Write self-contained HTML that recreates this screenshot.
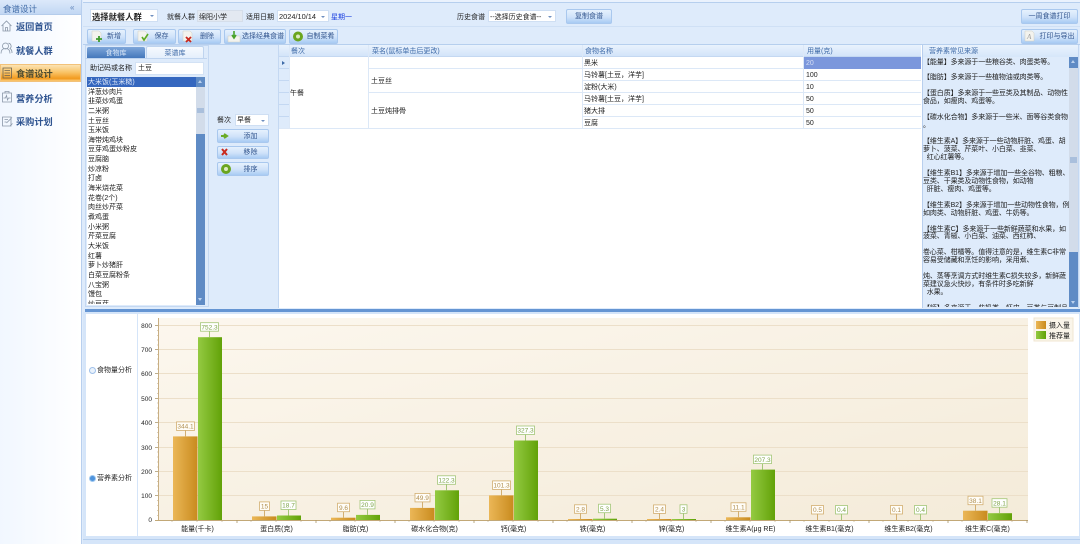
<!DOCTYPE html>
<html lang="zh"><head><meta charset="utf-8"><title>食谱设计</title>
<style>
*{box-sizing:border-box}
html,body{margin:0;padding:0;background:#deebfb}
#w{width:1080px;height:544px;position:relative;overflow:hidden;background:#deebfb;font-family:"Liberation Sans","Noto Sans CJK SC",sans-serif;font-size:7px;color:#222;filter:blur(.3px)}
.a,.t{position:absolute}
.t{white-space:pre;line-height:10px;height:10px;margin-top:.8px}
.nav{font-size:9.2px;font-weight:700;color:#2f5490;left:16px;line-height:14px;height:14px;margin-top:2px}
.btn{position:absolute;border:1px solid #a9c8ee;border-radius:2px;background:linear-gradient(#e6f1fd,#cfe2f9 55%,#a8cbf3);color:#34578f;text-align:center;font-size:7px;line-height:13.5px;white-space:nowrap}
.sel{position:absolute;background:#fff;border:1px solid #cfdff3}
.sel:after{content:"";position:absolute;right:3px;top:45%;border:2px solid transparent;border-top:2.5px solid #6f8fc0;border-bottom:0}
.lst{left:88px;color:#222}
.h{color:#3f6ba8;top:46px}
.c{color:#222}
.ln{position:absolute;background:#dce8f7}
svg{position:absolute;overflow:visible}
#chart text{font-family:"Liberation Sans","Noto Sans CJK SC",sans-serif}
.yl{font-size:6.5px;fill:#222;text-anchor:end}
.xl{font-size:7px;fill:#222;text-anchor:middle}
.lo rect{fill:#fffdf8;stroke:#d2ae70;stroke-width:.8}
.lg rect{fill:#fff;stroke:#a3c678;stroke-width:.8}
.lo path{stroke:#d2ae70;stroke-width:1;fill:none}
.lg path{stroke:#a3c678;stroke-width:1;fill:none}
.lo text{font-size:6.5px;fill:#b08f50;text-anchor:middle}
.lg text{font-size:6.5px;fill:#7da348;text-anchor:middle}
</style></head><body><div id="w">

<!-- sidebar -->
<div class="a" style="left:0;top:0;width:82px;height:544px;background:linear-gradient(90deg,#f1f7ff,#fff);border-right:1px solid #b8cfee"></div>
<div class="a" style="left:0;top:0;width:81px;height:15px;background:linear-gradient(#dce9fa,#c2d7f3);border-bottom:1px solid #b4cceb"></div>
<div class="t" style="left:3px;top:3px;font-size:8.5px;color:#3f6aa6">食谱设计</div>
<div class="t" style="left:70px;top:2px;font-size:8px;color:#5d82b8">«</div>
<div class="a" style="left:0;top:64px;width:81px;height:18px;background:linear-gradient(#fbe3b4,#f9c468 45%,#f29a1e 85%,#fbcc7a);border:1px solid #f2c27a"></div>
<svg style="left:0;top:0" width="16" height="130" fill="none" stroke="#8a97a8" stroke-width=".8">
<path d="M1.500 26 L6.500 21 L11.500 26 M3 25 V31 H10 V25 M5.500 31 V27.500 H7.500 V31"/>
<circle cx="5.500" cy="46" r="3"/>
<path d="M1 53.500 c0-3.500 2-5 4.500-5 s4.500 1.500 4.500 5 M8.500 43.200 a3 3 0 0 1 1.500 5.300 c1.500 .7 2 2.500 2 4.500"/>
<path d="M3 68 H11.500 V78 H3 Z M4.500 70.500 H10 M4.500 73 H10 M4.500 75.500 H10" stroke="#6b6250"/>
<path d="M2.500 93 H11.500 V102 H2.500 Z M5 93 V91.500 H9 V93 M3.500 98 H5.500 L6.500 95.500 L7.500 100 L8.500 98 H10.500"/>
<path d="M2.500 117 H11 V126 H2.500 Z M4.500 119.500 H8 M4.500 122 H6.500 M6.500 123 L12 117.500 M10 126 L12.500 123.500"/>
</svg>
<div class="t nav" style="top:18px">返回首页</div>
<div class="t nav" style="top:42px">就餐人群</div>
<div class="t nav" style="top:65px;color:#4a4a30">食谱设计</div>
<div class="t nav" style="top:89.500px">营养分析</div>
<div class="t nav" style="top:113px">采购计划</div>

<!-- main top strips -->
<div class="a" style="left:83px;top:0;width:997px;height:3px;background:#eaf2fd;border-bottom:1px solid #b6cfee"></div>
<div class="a" style="left:83px;top:26px;width:997px;height:1px;background:#cfe0f5"></div>
<div class="a" style="left:83px;top:44px;width:997px;height:1px;background:#b6cfee"></div>

<div class="sel" style="left:90px;top:9px;width:68px;height:13px"></div>
<div class="t" style="left:92px;top:11px;font-size:8.300px;font-weight:700;color:#222">选择就餐人群</div>
<div class="t" style="left:167px;top:12px">就餐人群</div>
<div class="a" style="left:197px;top:10px;width:46px;height:12px;background:#e3e9f1;border:1px solid #d5deea"></div>
<div class="t" style="left:199px;top:12px">绵阳小学</div>
<div class="t" style="left:246px;top:12px">适用日期</div>
<div class="sel" style="left:277px;top:10px;width:52px;height:12px"></div>
<div class="t" style="left:279px;top:11px;font-size:7.400px">2024/10/14</div>
<div class="t" style="left:331px;top:12px;color:#1b3fe0">星期一</div>
<div class="t" style="left:457px;top:12px">历史食谱</div>
<div class="sel" style="left:488px;top:10px;width:68px;height:12px"></div>
<div class="t" style="left:490px;top:12px">--选择历史食谱--</div>
<div class="btn" style="left:566px;top:9px;width:46px;height:15px">复制食谱</div>
<div class="btn" style="left:1021px;top:9px;width:57px;height:15px">一周食谱打印</div>

<!-- toolbar -->
<div class="btn" style="left:87px;top:29px;width:39px;height:15px;padding-left:15px">新增</div>
<div class="btn" style="left:133px;top:29px;width:43px;height:15px;padding-left:14px">保存</div>
<div class="btn" style="left:178px;top:29px;width:43px;height:15px;padding-left:15px">删除</div>
<div class="btn" style="left:224px;top:29px;width:62px;height:15px;padding-left:16px">选择经典食谱</div>
<div class="btn" style="left:289px;top:29px;width:49px;height:15px;padding-left:14px">自制菜肴</div>
<div class="btn" style="left:1021px;top:29px;width:57px;height:15px;padding-left:15px">打印与导出</div>
<svg style="left:0;top:0" width="1080" height="180" fill="none">
<g fill="#f3f3ee" stroke="#cfcfc4" stroke-width=".5">
<path d="M92 31 H99 L101 33 V41 H92Z"/><path d="M138 31 H145 L147 33 V41 H138Z"/><path d="M183 31 H190 L192 33 V41 H183Z"/><path d="M228 36 H240 V42 H228Z"/><path d="M1025 31 H1032 L1034 33 V41 H1025Z"/>
</g>
<path d="M96 39 H102 M99 36 V42" stroke="#3e9a2e" stroke-width="1.800"/>
<path d="M142 37 L144 40 L148 34" stroke="#5cab23" stroke-width="1.600"/>
<path d="M186 37 L191 42 M191 37 L186 42" stroke="#c9281e" stroke-width="1.800"/>
<path d="M234 31 V37 M232 35 L234 38 L236 35" stroke="#49a32a" stroke-width="1.600"/>
<text x="1027" y="39" font-size="7" fill="#999" font-style="italic" font-family="Liberation Serif">A</text>
<circle cx="298" cy="36.500" r="5" fill="#6aa51e"/><circle cx="298" cy="36.500" r="2" fill="#ddeac0"/>
</svg>

<!-- left food panel -->
<div class="a" style="left:85px;top:45px;width:124px;height:262px;border:1px solid #c4d8f2;background:#deebfb"></div>
<div class="a" style="left:87px;top:47px;width:58px;height:12px;background:linear-gradient(#7ea6da,#3f74b9);border-radius:2px 2px 0 0;color:#dbe8f8;text-align:center;line-height:13px">食物库</div>
<div class="a" style="left:146px;top:46px;width:58px;height:13px;background:linear-gradient(#f6fafe,#e2edfb);border:1px solid #bfd4ef;border-bottom:0;border-radius:2px 2px 0 0;color:#3f6ba8;text-align:center;line-height:13px">菜谱库</div>
<div class="a" style="left:85px;top:58px;width:122px;height:1px;background:#bfd4ef"></div>
<div class="t" style="left:90px;top:63px">助记码或名称</div>
<div class="a" style="left:135px;top:62px;width:69px;height:13px;background:#fff;border:1px solid #d3e2f5"></div>
<div class="t" style="left:138px;top:63px">土豆</div>
<div class="a" style="left:87px;top:77px;width:118px;height:228px;background:#fff;overflow:hidden">
<div class="a" style="left:0;top:0;width:109px;height:10px;background:#3567bf"></div>
</div>
<div class="t lst" style="top:77.500px;color:#dfe8f8">大米饭(玉米糙)</div>
<div class="t lst" style="top:87px">洋葱炒肉片</div>
<div class="t lst" style="top:96.500px">韭菜炒鸡蛋</div>
<div class="t lst" style="top:106px">二米粥</div>
<div class="t lst" style="top:116px">土豆丝</div>
<div class="t lst" style="top:125.500px">玉米饭</div>
<div class="t lst" style="top:135px">海带炖鸡块</div>
<div class="t lst" style="top:144.500px">豆芽鸡蛋炒粉皮</div>
<div class="t lst" style="top:154.500px">豆腐脑</div>
<div class="t lst" style="top:164px">炒凉粉</div>
<div class="t lst" style="top:173.500px">打卤</div>
<div class="t lst" style="top:183px">海米烧花菜</div>
<div class="t lst" style="top:193px">花卷(2个)</div>
<div class="t lst" style="top:202.500px">肉丝炒芹菜</div>
<div class="t lst" style="top:212px">煮鸡蛋</div>
<div class="t lst" style="top:222px">小米粥</div>
<div class="t lst" style="top:231.500px">芹菜豆腐</div>
<div class="t lst" style="top:241px">大米饭</div>
<div class="t lst" style="top:251px">红薯</div>
<div class="t lst" style="top:260.500px">萝卜炒猪肝</div>
<div class="t lst" style="top:270px">白菜豆腐粉条</div>
<div class="t lst" style="top:280px">八宝粥</div>
<div class="t lst" style="top:289.500px">馒包</div>
<div class="a" style="left:88px;top:300px;width:100px;height:4px;overflow:hidden"><div class="t" style="left:0;top:-1px">炒豆芽</div></div>
<div class="a" style="left:196px;top:77px;width:9px;height:228px;background:#5f8bc5"></div>
<div class="a" style="left:196px;top:87px;width:9px;height:47px;background:#d2dcea"></div>
<div class="a" style="left:197px;top:108px;width:7px;height:5px;background:#a9bfdc"></div>
<div class="a" style="left:198px;top:80px;border:2.500px solid transparent;border-bottom:3px solid #bcd2ef;border-top:0"></div>
<div class="a" style="left:198px;top:298px;border:2.500px solid transparent;border-top:3px solid #bcd2ef;border-bottom:0"></div>

<!-- middle -->
<div class="t" style="left:217px;top:115px">餐次</div>
<div class="sel" style="left:235px;top:114px;width:34px;height:12px"></div>
<div class="t" style="left:237px;top:115px">早餐</div>
<div class="btn" style="left:217px;top:129px;width:52px;height:14px;padding-left:15px;line-height:13px">添加</div>
<div class="btn" style="left:217px;top:146px;width:52px;height:13px;padding-left:15px;line-height:12px">移除</div>
<div class="btn" style="left:217px;top:162px;width:52px;height:14px;padding-left:15px;line-height:13px">排序</div>
<svg style="left:0;top:0" width="300" height="180" fill="none">
<path d="M221 136 H226 M224 134 L227 136 L224 138" stroke="#6bac27" stroke-width="2"/>
<path d="M222 149 L227 155 M227 149 L222 155" stroke="#c92a1e" stroke-width="2"/>
<circle cx="226" cy="169" r="5" fill="#6aa51e"/><circle cx="226" cy="169" r="2" fill="#ddeac0"/>
</svg>

<!-- table -->
<div class="a" style="left:278px;top:45px;width:644px;height:263px;background:#fff;border-left:1px solid #c4d8f2"></div>
<div class="a" style="left:279px;top:45px;width:642px;height:12px;background:linear-gradient(#e9f2fd,#d3e4f9);border-bottom:1px solid #c4d8f2"></div>
<div class="a" style="left:279px;top:57px;width:10px;height:72px;background:#deebfb"></div>
<div class="t h" style="left:291px">餐次</div>
<div class="t h" style="left:372px">菜名(鼠标单击后更改)</div>
<div class="t h" style="left:585px">食物名称</div>
<div class="t h" style="left:807px">用量(克)</div>
<div class="ln" style="left:289px;top:45px;width:1px;height:84px"></div>
<div class="ln" style="left:368px;top:45px;width:1px;height:84px"></div>
<div class="ln" style="left:582px;top:45px;width:1px;height:84px"></div>
<div class="ln" style="left:803px;top:45px;width:1px;height:84px"></div>
<div class="ln" style="left:279px;top:68px;width:10px;height:1px;background:#c4d8f2"></div>
<div class="ln" style="left:279px;top:80px;width:10px;height:1px;background:#c4d8f2"></div>
<div class="ln" style="left:279px;top:92px;width:10px;height:1px;background:#c4d8f2"></div>
<div class="ln" style="left:279px;top:104px;width:10px;height:1px;background:#c4d8f2"></div>
<div class="ln" style="left:279px;top:116px;width:10px;height:1px;background:#c4d8f2"></div>
<div class="ln" style="left:369px;top:68px;width:552px;height:1px"></div>
<div class="ln" style="left:583px;top:80px;width:338px;height:1px"></div>
<div class="ln" style="left:369px;top:92px;width:552px;height:1px"></div>
<div class="ln" style="left:583px;top:104px;width:338px;height:1px"></div>
<div class="ln" style="left:583px;top:116px;width:338px;height:1px"></div>
<div class="ln" style="left:279px;top:128px;width:642px;height:1px"></div>
<div class="a" style="left:804px;top:57px;width:117px;height:12px;background:#7b97dc"></div>
<div class="a" style="left:282px;top:61px;border:2.500px solid transparent;border-left:3px solid #3f6ba8;border-right:0"></div>
<div class="t c" style="left:290px;top:88px">午餐</div>
<div class="t c" style="left:371px;top:76px">土豆丝</div>
<div class="t c" style="left:371px;top:106px">土豆炖排骨</div>
<div class="t c" style="left:584px;top:58px">黑米</div>
<div class="t c" style="left:584px;top:70px">马铃薯[土豆，洋芋]</div>
<div class="t c" style="left:584px;top:82px">淀粉(大米)</div>
<div class="t c" style="left:584px;top:94px">马铃薯[土豆，洋芋]</div>
<div class="t c" style="left:584px;top:106px">猪大排</div>
<div class="t c" style="left:584px;top:118px">豆腐</div>
<div class="t" style="left:806px;top:58px;color:#d5def5">20</div>
<div class="t c" style="left:806px;top:70px">100</div>
<div class="t c" style="left:806px;top:82px">10</div>
<div class="t c" style="left:806px;top:94px">50</div>
<div class="t c" style="left:806px;top:106px">50</div>
<div class="t c" style="left:806px;top:118px">50</div>

<!-- right panel -->
<div class="a" style="left:922px;top:45px;width:157px;height:263px;background:#deebfb;border-left:1px solid #b8cfee;border-right:1px solid #c4d8f2"></div>
<div class="a" style="left:923px;top:45px;width:155px;height:12px;background:linear-gradient(#e9f2fd,#d6e6fa)"></div>
<div class="t" style="left:929px;top:46px;color:#3f6ba8">营养素常见来源</div>
<div class="a" style="left:923px;top:57px;width:146px;height:250px;overflow:hidden">
<div class="a" style="left:0;top:1.500px;line-height:7.950px;font-size:7px;white-space:pre;color:#222;letter-spacing:-.1px">【能量】多来源于一些粮谷类、肉蛋类等。

【脂肪】多来源于一些植物油或肉类等。

【蛋白质】多来源于一些豆类及其制品、动物性
食品，如瘦肉、鸡蛋等。

【碳水化合物】多来源于一些米、面等谷类食物
。

【维生素A】多来源于一些动物肝脏、鸡蛋、胡
萝卜、菠菜、芹菜叶、小白菜、韭菜、
  红心红薯等。

【维生素B1】多来源于增加一些全谷物、粗粮、
豆类、干果类及动物性食物，如动物
  肝脏、瘦肉、鸡蛋等。

【维生素B2】多来源于增加一些动物性食物，例
如肉类、动物肝脏、鸡蛋、牛奶等。

【维生素C】多来源于一些新鲜蔬菜和水果，如
菠菜、青椒、小白菜、油菜、西红柿、

卷心菜、柑橘等。值得注意的是，维生素C非常
容易受储藏和烹饪的影响，采用煮、

炖、蒸等烹调方式时维生素C损失较多，新鲜蔬
菜建议急火快炒，有条件时多吃新鲜
  水果。

【钙】多来源于一些奶类、虾皮、豆类与豆制品</div>
</div>
<div class="a" style="left:1069px;top:57px;width:9px;height:250px;background:#5f8bc5"></div>
<div class="a" style="left:1069px;top:68px;width:9px;height:184px;background:#d2dcea"></div>
<div class="a" style="left:1070px;top:157px;width:7px;height:6px;background:#a9bfdc"></div>
<div class="a" style="left:1071px;top:60px;border:2.500px solid transparent;border-bottom:3px solid #bcd2ef;border-top:0"></div>
<div class="a" style="left:1071px;top:301px;border:2.500px solid transparent;border-top:3px solid #bcd2ef;border-bottom:0"></div>

<!-- splitter -->
<div class="a" style="left:85px;top:309px;width:995px;height:3px;background:#6595d3"></div>

<!-- bottom -->
<div class="a" style="left:83px;top:312px;width:997px;height:232px;background:#d5e5f9"></div>
<div class="a" style="left:86px;top:314px;width:51px;height:222px;background:#fff"></div>
<div class="a" style="left:138px;top:314px;width:941px;height:222px;background:#fff"></div>
<div class="a" style="left:83px;top:539px;width:997px;height:1px;background:#b6cfee"></div>
<div class="a" style="left:89px;top:367px;width:7px;height:7px;border-radius:50%;background:#e9f2fc;border:1.500px solid #9fc0ea"></div>
<div class="a" style="left:89px;top:475px;width:7px;height:7px;border-radius:50%;background:#4e93dc;border:1.500px solid #9fc8f0"></div>
<div class="t" style="left:97px;top:365px">食物量分析</div>
<div class="t" style="left:97px;top:473px">营养素分析</div>

<svg id="chart" style="left:0;top:0" width="1080" height="544">
<defs>
<linearGradient id="bg" x1="0" y1="0" x2="1" y2="1"><stop offset="0" stop-color="#fcf7ee"/><stop offset="1" stop-color="#f4ebd9"/></linearGradient>
<linearGradient id="o"><stop offset="0" stop-color="#ebb757"/><stop offset="1" stop-color="#c98b1e"/></linearGradient>
<linearGradient id="g"><stop offset="0" stop-color="#94ca42"/><stop offset="1" stop-color="#62a208"/></linearGradient>
</defs>
<rect x="158" y="318" width="870" height="202" fill="url(#bg)"/>
<g stroke="#ecdfc9" stroke-width="1">
<path d="M158 325.500 H1028 M158 349.500 H1028 M158 373.500 H1028 M158 398.500 H1028 M158 422.500 H1028 M158 447.500 H1028 M158 471.500 H1028 M158 495.500 H1028"/>
</g>
<path d="M158.500 318 V520" stroke="#c8ae82" stroke-width="1"/>
<path d="M155 520.500 H1028" stroke="#c2a877" stroke-width="1"/>
<path d="M155 325.500 H158 M155 349.500 H158 M155 373.500 H158 M155 398.500 H158 M155 422.500 H158 M155 447.500 H158 M155 471.500 H158 M155 495.500 H158" stroke="#a89468" stroke-width=".8"/>
<path d="M157 330.500 H158 M157 335.500 H158 M157 340 H158 M157 345 H158 M157 354.500 H158 M157 359 H158 M157 364 H158 M157 369 H158 M157 378.500 H158 M157 383.500 H158 M157 388.500 H158 M157 393.500 H158 M157 403 H158 M157 408 H158 M157 413 H158 M157 418 H158 M157 427.500 H158 M157 432.500 H158 M157 437.500 H158 M157 442.500 H158 M157 452 H158 M157 457 H158 M157 462 H158 M157 467 H158 M157 476.500 H158 M157 481.500 H158 M157 486 H158 M157 491 H158 M157 500.500 H158 M157 505.500 H158 M157 510.500 H158 M157 515.500 H158" stroke="#b8a47c" stroke-width=".6"/>
<path d="M237 520 V523 M316 520 V523 M395 520 V523 M474 520 V523 M553 520 V523 M632 520 V523 M711 520 V523 M790 520 V523 M869 520 V523 M948 520 V523 M1027 520 V523" stroke="#a89468" stroke-width=".8"/>
<path d="M172 520 V522 M197 520 V522 M222 520 V522 M251 520 V522 M276 520 V522 M301 520 V522 M330 520 V522 M355 520 V522 M380 520 V522 M409 520 V522 M434 520 V522 M459 520 V522 M488 520 V522 M513 520 V522 M538 520 V522 M567 520 V522 M592 520 V522 M617 520 V522 M646 520 V522 M671 520 V522 M696 520 V522 M725 520 V522 M750 520 V522 M775 520 V522 M804 520 V522 M829 520 V522 M854 520 V522 M883 520 V522 M908 520 V522 M933 520 V522 M962 520 V522 M987 520 V522 M1012 520 V522" stroke="#b8a47c" stroke-width=".6"/>
<g class="yl">
<text class="yl" x="152" y="328">800</text><text class="yl" x="152" y="352">700</text><text class="yl" x="152" y="376">600</text><text class="yl" x="152" y="401">500</text><text class="yl" x="152" y="425">400</text><text class="yl" x="152" y="450">300</text><text class="yl" x="152" y="474">200</text><text class="yl" x="152" y="498">100</text><text class="yl" x="152" y="522">0</text>
</g>
<g fill="url(#o)">
<rect x="173" y="436.400" width="24.500" height="83.600"/><rect x="252" y="516.400" width="24.500" height="3.600"/><rect x="331" y="517.700" width="24.500" height="2.300"/><rect x="410" y="507.900" width="24.500" height="12.100"/><rect x="489" y="495.400" width="24.500" height="24.600"/><rect x="568" y="519" width="24.500" height="1"/><rect x="647" y="519" width="24.500" height="1"/><rect x="726" y="517.300" width="24.500" height="2.700"/><rect x="963" y="510.700" width="24.500" height="9.300"/>
</g>
<g fill="url(#g)">
<rect x="198" y="337.200" width="24" height="182.800"/><rect x="277" y="515.500" width="24" height="4.500"/><rect x="356" y="514.900" width="24" height="5.100"/><rect x="435" y="490.300" width="24" height="29.700"/><rect x="514" y="440.500" width="24" height="79.500"/><rect x="593" y="518.700" width="24" height="1.300"/><rect x="672" y="519" width="24" height="1"/><rect x="751" y="469.600" width="24" height="50.400"/><rect x="988" y="513.200" width="24" height="6.800"/>
</g>
<g class="lo">
<path d="M185.500 430.400V436.400"/><rect x="176.500" y="421.900" width="18" height="8.500"/><text x="185.500" y="428.600">344.1</text>
<path d="M264.500 510.400V516.400"/><rect x="259.500" y="501.900" width="10" height="8.500"/><text x="264.500" y="508.600">15</text>
<path d="M343.500 511.700V517.700"/><rect x="337.500" y="503.200" width="12" height="8.500"/><text x="343.500" y="509.900">9.6</text>
<path d="M422.500 501.900V507.900"/><rect x="415" y="493.400" width="15" height="8.500"/><text x="422.500" y="500.100">49.9</text>
<path d="M501.500 489.400V495.400"/><rect x="492.500" y="480.900" width="18" height="8.500"/><text x="501.500" y="487.600">101.3</text>
<path d="M580.500 513.300V519.300"/><rect x="574.500" y="504.800" width="12" height="8.500"/><text x="580.500" y="511.500">2.8</text>
<path d="M659.500 513.400V519.400"/><rect x="653.500" y="504.900" width="12" height="8.500"/><text x="659.500" y="511.600">2.4</text>
<path d="M738.500 511.300V517.300"/><rect x="731" y="502.800" width="15" height="8.500"/><text x="738.500" y="509.500">11.1</text>
<path d="M817.500 514V520"/><rect x="811.500" y="505.500" width="12" height="8.500"/><text x="817.500" y="512.200">0.5</text>
<path d="M896.500 514V520"/><rect x="890.500" y="505.500" width="12" height="8.500"/><text x="896.500" y="512.200">0.1</text>
<path d="M975.500 504.700V510.700"/><rect x="968" y="496.200" width="15" height="8.500"/><text x="975.500" y="502.900">38.1</text>
</g>
<g class="lg">
<path d="M209.500 331.200V337.200"/><rect x="200.500" y="322.700" width="18" height="8.500"/><text x="209.500" y="329.400">752.3</text>
<path d="M288.500 509.500V515.500"/><rect x="281" y="501" width="15" height="8.500"/><text x="288.500" y="507.700">18.7</text>
<path d="M367.500 508.900V514.900"/><rect x="360" y="500.400" width="15" height="8.500"/><text x="367.500" y="507.100">20.9</text>
<path d="M446.500 484.300V490.300"/><rect x="437.500" y="475.800" width="18" height="8.500"/><text x="446.500" y="482.500">122.3</text>
<path d="M525.500 434.500V440.500"/><rect x="516.500" y="426" width="18" height="8.500"/><text x="525.500" y="432.700">327.3</text>
<path d="M604.500 512.700V518.700"/><rect x="598.500" y="504.200" width="12" height="8.500"/><text x="604.500" y="510.900">5.3</text>
<path d="M683.500 513.300V519.300"/><rect x="680" y="504.800" width="7" height="8.500"/><text x="683.500" y="511.500">3</text>
<path d="M762.500 463.600V469.600"/><rect x="753.500" y="455.100" width="18" height="8.500"/><text x="762.500" y="461.800">207.3</text>
<path d="M841.500 514V520"/><rect x="835.500" y="505.500" width="12" height="8.500"/><text x="841.500" y="512.200">0.4</text>
<path d="M920.500 514V520"/><rect x="914.500" y="505.500" width="12" height="8.500"/><text x="920.500" y="512.200">0.4</text>
<path d="M999.500 507.200V513.200"/><rect x="992" y="498.700" width="15" height="8.500"/><text x="999.500" y="505.400">28.1</text>
</g>
<text class="xl" x="197.500" y="531">能量(千卡)</text>
<text class="xl" x="276.500" y="531">蛋白质(克)</text>
<text class="xl" x="355.500" y="531">脂肪(克)</text>
<text class="xl" x="434.500" y="531">碳水化合物(克)</text>
<text class="xl" x="513.500" y="531">钙(毫克)</text>
<text class="xl" x="592.500" y="531">铁(毫克)</text>
<text class="xl" x="671.500" y="531">锌(毫克)</text>
<text class="xl" x="750.500" y="531">维生素A(μg RE)</text>
<text class="xl" x="829.500" y="531">维生素B1(毫克)</text>
<text class="xl" x="908.500" y="531">维生素B2(毫克)</text>
<text class="xl" x="987.500" y="531">维生素C(毫克)</text>
<rect x="1034" y="318" width="39" height="23" fill="#faf5ea" stroke="#f0e6d2" stroke-width="1"/>
<rect x="1036" y="321" width="10" height="8" fill="url(#o)"/>
<rect x="1036" y="331" width="10" height="8" fill="url(#g)"/>
<text x="1049" y="327.500" font-size="7" fill="#222">摄入量</text>
<text x="1049" y="338" font-size="7" fill="#222">推荐量</text>
</svg>
</div></body></html>
